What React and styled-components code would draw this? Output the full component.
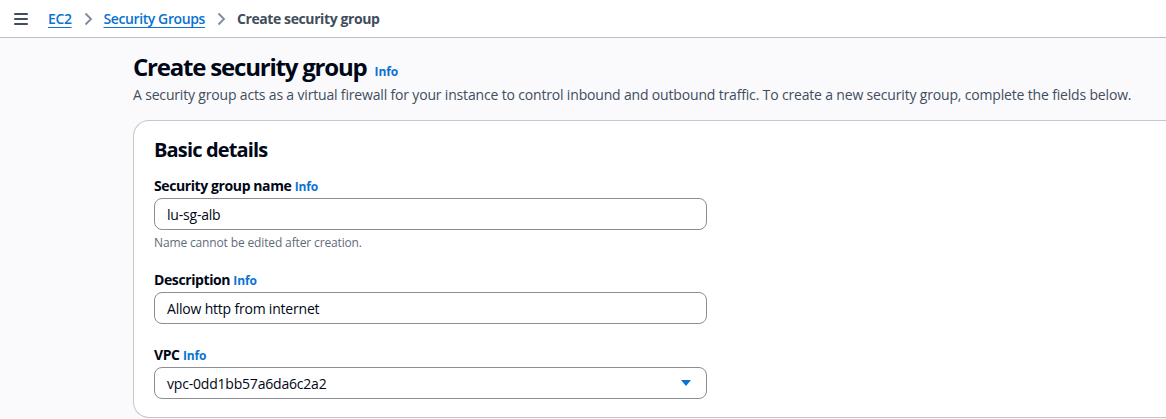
import styled, { createGlobalStyle } from "styled-components"

const GlobalStyle = createGlobalStyle`
    html, body {
        margin: 0;
        padding: 0;
        background: #fafafc;
        font-family: "Open Sans", "Noto Sans", Arial, sans-serif;
        color: #000716;
    }
`

const Info = () => <InfoLink>Info</InfoLink>

const Field = ({ label, hint, children }) => (
    <FieldBlock>
        <Label>
            {label} <Info />
        </Label>
        {children}
        {hint && <Hint>{hint}</Hint>}
    </FieldBlock>
)

export default function App() {
    return (
        <>
            <GlobalStyle />
            <TopBar>
                <Burger>
                    <span />
                    <span />
                    <span />
                </Burger>
                <Crumbs>
                    <Crumb href="#">EC2</Crumb>
                    <Chevron viewBox="0 0 16 16">
                        <path d="M5.5 2.5 11 8l-5.5 5.5" />
                    </Chevron>
                    <Crumb href="#">Security Groups</Crumb>
                    <Chevron viewBox="0 0 16 16">
                        <path d="M5.5 2.5 11 8l-5.5 5.5" />
                    </Chevron>
                    <Current>Create security group</Current>
                </Crumbs>
            </TopBar>

            <Main>
                <Header>
                    <Title>
                        Create security group <Info />
                    </Title>
                    <Lead>
                        A security group acts as a virtual firewall for your instance to control inbound and outbound traffic. To create a new security group, complete the fields below.
                    </Lead>
                </Header>

                <Card>
                    <CardTitle>Basic details</CardTitle>
                    <Field label="Security group name" hint="Name cannot be edited after creation.">
                        <Input defaultValue="lu-sg-alb" />
                    </Field>
                    <Field label="Description">
                        <Input defaultValue="Allow http from internet" />
                    </Field>
                    <Field label="VPC">
                        <Select>
                            <span>vpc-0dd1bb57a6da6c2a2</span>
                            <Caret viewBox="0 0 12 12">
                                <path d="M1 3h10L6 9z" />
                            </Caret>
                        </Select>
                    </Field>
                </Card>
            </Main>
        </>
    )
}

const TopBar = styled.header`
    height: 37px;
    background: #ffffff;
    border-bottom: 1px solid #b6bec9;
    display: flex;
    align-items: center;
    padding-left: 14px;
`

const Burger = styled.div`
    width: 14px;
    display: flex;
    flex-direction: column;
    gap: 3px;

    span {
        display: block;
        height: 2px;
        background: #414d5c;
        border-radius: 1px;
    }
`

const Crumbs = styled.nav`
    display: flex;
    align-items: center;
    margin-left: 20px;
    font-size: 14px;
    font-weight: 600;
    letter-spacing: -0.4px;
`

const Crumb = styled.a`
    color: #0972d3;
    text-decoration: underline;
    text-underline-offset: 3px;
    text-decoration-thickness: 1px;
`

const Chevron = styled.svg`
    width: 16px;
    height: 16px;
    margin: 0 8px;
    fill: none;
    stroke: #7d8998;
    stroke-width: 1.8;
`

const Current = styled.span`
    color: #414d5c;
    font-weight: 700;
`

const Main = styled.main`
    padding-left: 133px;
`

const Header = styled.div`
    padding: 15px 0 15px;
`

const Title = styled.h1`
    margin: 0;
    font-size: 24px;
    line-height: 28px;
    font-weight: 700;
    letter-spacing: -1.2px;
    display: flex;
    align-items: baseline;
    gap: 8px;
`

const InfoLink = styled.span`
    font-size: 12px;
    font-weight: 700;
    letter-spacing: -0.1px;
    color: #0972d3;
`

const Lead = styled.p`
    margin: -1px 0 0;
    font-size: 14px;
    line-height: 20px;
    letter-spacing: -0.17px;
    color: #414d5c;
    white-space: nowrap;
`

const Card = styled.section`
    background: #ffffff;
    border: 1px solid #c6c6cd;
    border-right: none;
    border-radius: 16px 0 0 16px;
    padding: 16px 0 18px 20px;
`

const CardTitle = styled.h2`
    margin: 0 0 12px;
    font-size: 20px;
    line-height: 26px;
    font-weight: 700;
    letter-spacing: -0.85px;
`

const FieldBlock = styled.div`
    width: 553px;
    margin-bottom: 20px;

    &:last-child {
        margin-bottom: 0;
    }
`

const Label = styled.div`
    font-size: 14px;
    line-height: 22px;
    font-weight: 700;
    letter-spacing: -0.4px;
`

const Input = styled.input`
    display: block;
    box-sizing: border-box;
    width: 100%;
    height: 32px;
    border: 1px solid #8c8c94;
    border-radius: 8px;
    padding: 0 12px;
    font: inherit;
    font-size: 14px;
    letter-spacing: -0.2px;
    color: #000716;
    background: #ffffff;
    outline: none;
`

const Hint = styled.div`
    margin: 5px 0 -2px;
    font-size: 12px;
    line-height: 16px;
    letter-spacing: -0.14px;
    color: #5f6b7a;
`

const Select = styled.div`
    box-sizing: border-box;
    height: 32px;
    border: 1px solid #8c8c94;
    border-radius: 8px;
    padding: 0 14px 0 12px;
    display: flex;
    align-items: center;
    justify-content: space-between;
    font-size: 14px;
    letter-spacing: -0.2px;
`

const Caret = styled.svg`
    width: 12px;
    height: 12px;
    fill: #0972d3;
`
